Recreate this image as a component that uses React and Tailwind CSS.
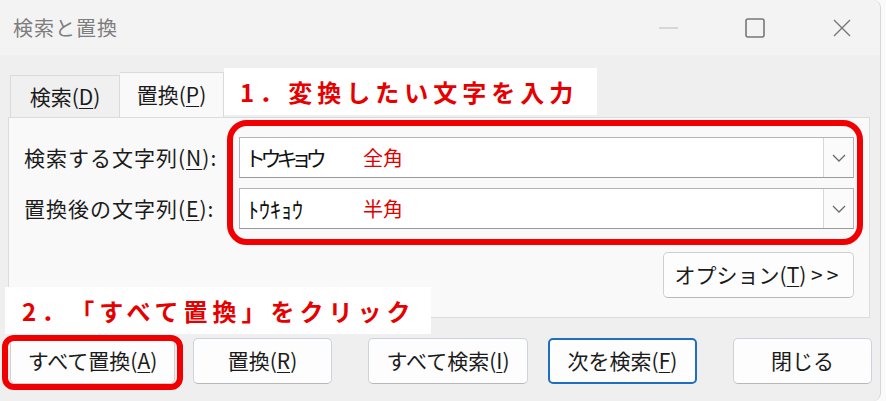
import React from "react";

// 「検索と置換」ダイアログ（注釈付き）
const font = "font-['Noto_Sans_CJK_JP','Noto_Sans',sans-serif]";

const Key = ({ children }) => (
  <span className="underline underline-offset-[3px] decoration-1">{children}</span>
);

const Btn = ({ children, className = "" }) => (
  <div
    className={`h-[46px] flex items-center justify-center rounded-[5px] bg-[#fdfdfd] text-[21px] text-[#1b1b1b] ${className}`}
  >
    {children}
  </div>
);

const Combo = ({ value, note, half }) => (
  <div className="flex-1 h-[41px] flex border border-[#b4b4b4] border-b-[#9a9a9a] bg-white">
    <div className="flex-1 flex items-center pl-[8px]">
      <span
        className={`w-[115px] text-[#111] ${half ? "text-[22px]" : "text-[21px] tracking-[-3px] [font-feature-settings:'palt']"}`}
      >
        {value}
      </span>
      <span className="text-[20px] text-[#e00000]">{note}</span>
    </div>
    <div className="w-[30px] flex items-center justify-center border-l border-[#d8d8d8] bg-[#fbfbfb]">
      <svg width="14" height="8" viewBox="0 0 14 8" fill="none">
        <path d="M1 1l6 6 6-6" stroke="#6a6a6a" strokeWidth="1.3" />
      </svg>
    </div>
  </div>
);

const App = () => {
  return (
    <div className={`w-[886px] h-[401px] bg-[#fafafa] overflow-hidden ${font}`}>
      <div className="relative w-[881px] h-[401px] bg-[#efefef] rounded-tr-[8px] rounded-br-[8px] border-r border-[#d6d6d6] flex flex-col">
        {/* タイトルバー */}
        <div className="h-[55px] bg-[#f3f3f3] flex items-center rounded-tr-[8px]">
          <span className="pl-[13px] text-[20px] tracking-[1px] text-[#7d7d7d]">検索と置換</span>
          <div className="ml-auto flex items-center">
            <svg width="20" height="20" viewBox="0 0 20 20" className="mr-[66px]">
              <path d="M0 10h19" stroke="#c6c6c6" strokeWidth="1.3" />
            </svg>
            <svg width="20" height="20" viewBox="0 0 20 20" className="mr-[67px]">
              <rect x="1" y="1" width="18" height="18" rx="2" fill="none" stroke="#777" strokeWidth="1.6" />
            </svg>
            <svg width="20" height="20" viewBox="0 0 20 20" className="mr-[28px]">
              <path d="M2 2l16 16M18 2L2 18" stroke="#777" strokeWidth="1.4" />
            </svg>
          </div>
        </div>

        {/* タブ */}
        <div className="h-[62px] flex items-end pl-[10px]">
          <div className="w-[110px] h-[42px] flex items-center justify-center border border-b-0 border-[#dadada] bg-[#f0f0f0] text-[21px] text-[#1b1b1b]">
            検索(<Key>D</Key>)
          </div>
          <div className="w-[104px] h-[45px] flex items-center justify-center border-t border-r border-[#dadada] bg-[#f9f9f9] text-[21px] text-[#1b1b1b]">
            置換(<Key>P</Key>)
          </div>
        </div>

        {/* パネル */}
        <div className="mx-[8px] w-[862px] h-[201px] border border-[#dcdcdc] bg-[#f9f9f9] px-[15px] pt-[19px] flex flex-col">
          <div className="flex items-center">
            <span className="w-[215px] text-[21px] tracking-[1px] text-[#1b1b1b]">
              検索する文字列(<Key>N</Key>):
            </span>
            <Combo value="トウキョウ" note="全角" />
          </div>
          <div className="flex items-center mt-[10px]">
            <span className="w-[215px] text-[21px] tracking-[1px] text-[#1b1b1b]">
              置換後の文字列(<Key>E</Key>):
            </span>
            <Combo value="ﾄｳｷｮｳ" note="半角" half />
          </div>
          <div className="flex justify-end mt-[23px]">
            <Btn className="w-[191px] border border-[#d0d0d0] border-b-[#b8b8b8]">
              オプション(<Key>T</Key>)&nbsp;<span className="tracking-[4px]">&gt;&gt;</span>
            </Btn>
          </div>
        </div>

        {/* ボタン行 */}
        <div className="flex items-center pl-[10px] mt-[20px]">
          <Btn className="w-[165px] border border-[#d0d0d0]">
            すべて置換(<Key>A</Key>)
          </Btn>
          <Btn className="w-[139px] ml-[18px] border border-[#ccd3db] border-b-[#b8b8b8]">
            置換(<Key>R</Key>)
          </Btn>
          <Btn className="w-[160px] ml-[36px] border border-[#ccd3db] border-b-[#b8b8b8]">
            すべて検索(<Key>I</Key>)
          </Btn>
          <Btn className="w-[149px] ml-[20px] border-2 border-[#1e6fc0]">
            次を検索(<Key>F</Key>)
          </Btn>
          <Btn className="w-[139px] ml-[36px] border border-[#ccd3db] border-b-[#b8b8b8]">
            閉じる
          </Btn>
        </div>

        {/* 注釈 */}
        <div className="absolute left-[224px] top-[68px] w-[373px] h-[47px] bg-white flex items-center pl-[16px]">
          <span className="text-[24px] font-bold text-[#e60000] tracking-[5px] [text-spacing-trim:space-all]">1．変換したい文字を入力</span>
        </div>
        <div className="absolute left-[227px] top-[120px] w-[636px] h-[125px] border-[6px] border-[#f00000] rounded-[20px]" />
        <div className="absolute left-[5px] top-[287px] w-[426px] h-[47px] bg-white flex items-center pl-[17px]">
          <span className="text-[24px] font-bold text-[#e60000] tracking-[5px] [text-spacing-trim:space-all]">2．「すべて置換」をクリック</span>
        </div>
        <div className="absolute left-[2px] top-[335px] w-[181px] h-[55px] border-[6px] border-[#f00000] rounded-[12px]" />
      </div>
    </div>
  );
};

export default App;
